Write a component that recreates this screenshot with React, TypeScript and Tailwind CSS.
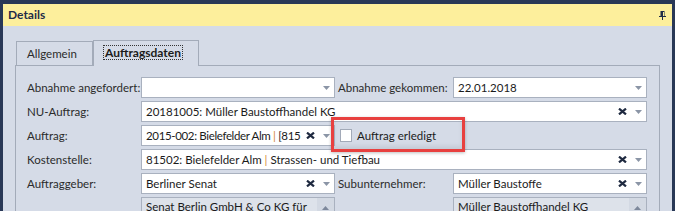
import React from "react";

const font = { fontFamily: 'Lato, "Noto Sans", sans-serif' };

function Arrow({ up = false }: { up?: boolean }) {
  return (
    <svg width="7" height="4" viewBox="0 0 7 4" className="shrink-0">
      {up ? <path d="M0 4 L3.5 0 L7 4 Z" fill="#7d889b" /> : <path d="M0 0 L7 0 L3.5 4 Z" fill="#8b95a6" />}
    </svg>
  );
}

function Clear() {
  return (
    <svg width="9" height="7" viewBox="0 0 9 7" className="shrink-0">
      <path d="M1 0.6 L8 6.4 M8 0.6 L1 6.4" stroke="#1f2a40" strokeWidth="2.2" />
    </svg>
  );
}

function Pipe() {
  return <span className="text-[#d3883a]">|</span>;
}

interface ComboProps {
  children?: React.ReactNode;
  wide?: boolean;
  clear?: boolean;
  tight?: boolean;
}

function Combo({ children, wide, clear, tight }: ComboProps) {
  return (
    <div
      className={
        (wide ? "w-[506px]" : "w-[194px]") +
        " h-[21px] shrink-0 bg-white border border-[#a9b1bf] flex items-center pl-[4px] pr-[4px] gap-[8px]"
      }
    >
      <div
        className={
          (tight ? "tracking-[-0.35px] -mr-[6px] " : "") +
          "flex-1 min-w-0 overflow-hidden whitespace-nowrap text-[11.5px] text-[#1b1b1b] leading-[15px]"
        }
      >
        {children}
      </div>
      {clear && <Clear />}
      <Arrow />
    </div>
  );
}

function Memo({ children }: { children: React.ReactNode }) {
  return (
    <div className="w-[194px] h-[30px] shrink-0 bg-[#dde2ea] border border-[#a9b1bf] flex items-start">
      <div className="flex-1 min-w-0 overflow-hidden whitespace-nowrap text-[11.5px] text-[#1b1b1b] pl-[4px] pt-[1px] leading-[15px]">
        {children}
      </div>
      <div className="w-[17px] h-[20px] bg-[#d3d9e3] flex items-center justify-center">
        <Arrow up />
      </div>
    </div>
  );
}

function Label({ children, second }: { children: React.ReactNode; second?: boolean }) {
  return (
    <div className={(second ? "ml-[3px] w-[115px]" : "w-[114px]") + " shrink-0 text-[11.5px] text-[#2b2b2b] whitespace-nowrap"}>
      {children}
    </div>
  );
}

export default function App() {
  return (
    <div className="w-[675px] h-[211px] overflow-hidden bg-[#293856] px-[3px] pt-[4px]" style={font}>
      <div className="flex flex-col h-full">
        <div className="h-[22px] shrink-0 bg-[#fdef9c] flex items-center justify-between pl-[5px] pr-[6px]">
          <span className="text-[12px] font-bold text-[#1f2c47]">Details</span>
          <svg width="7" height="9" viewBox="0 0 7 9">
            <path d="M1.5 0 H5.5 V5 H1.5 Z M0 5 H7 V6 H0 Z M3 6 H4 V9 H3 Z" fill="#1f2c47" />
            <path d="M4.5 1 V5" stroke="#fdef9c" strokeWidth="1" />
          </svg>
        </div>
        <div className="flex-1 bg-[#d5dbe7] px-[12px] pt-[14px]">
          <div className="relative z-10 flex items-start h-[26px] -mb-px pl-[1px]">
            <div className="mt-[1px] h-[24px] w-[77px] border border-b-0 border-[#a3abb9] flex items-center pl-[10px] text-[11.5px] text-[#2b2b2b]">
              Allgemein
            </div>
            <div className="h-[26px] w-[106px] border border-b-0 border-[#a3abb9] bg-[#d5dbe7] flex items-start pt-[4px] pl-[9px]">
              <span className="border border-dotted border-[#333] px-[1px] text-[12px] font-bold text-[#1b1b1b] leading-[13px]">
                Auftragsdaten
              </span>
            </div>
          </div>
          <div className="border border-[#a3abb9] h-[200px] pl-[11px] pt-[11px] flex flex-col gap-[3px]">
            <div className="flex items-center h-[21px]">
              <Label>Abnahme angefordert:</Label>
              <Combo />
              <Label second>Abnahme gekommen:</Label>
              <Combo>22.01.2018</Combo>
            </div>
            <div className="flex items-center h-[21px]">
              <Label>NU-Auftrag:</Label>
              <Combo wide clear>
                20181005: Müller Baustoffhandel KG
              </Combo>
            </div>
            <div className="relative flex items-center h-[21px]">
              <Label>Auftrag:</Label>
              <Combo clear tight>
                2015-002: Bielefelder Alm <Pipe /> [815
              </Combo>
              <div className="ml-[5px] w-[12px] h-[13px] bg-white border border-[#a2aab8]" />
              <span className="ml-[5px] text-[11.5px] text-[#1b1b1b]">Auftrag erledigt</span>
              <div className="absolute left-[304px] top-[-8px] w-[134px] h-[35px] border-[3px] border-[#e8403f] shadow-[inset_0_-3px_4px_rgba(0,0,0,0.08),0_1px_3px_rgba(0,0,0,0.25)]" />
            </div>
            <div className="flex items-center h-[21px]">
              <Label>Kostenstelle:</Label>
              <Combo wide clear>
                81502: Bielefelder Alm <Pipe /> Strassen- und Tiefbau
              </Combo>
            </div>
            <div className="flex items-center h-[21px]">
              <Label>Auftraggeber:</Label>
              <Combo clear>Berliner Senat</Combo>
              <Label second>Subunternehmer:</Label>
              <Combo clear>Müller Baustoffe</Combo>
            </div>
            <div className="flex items-start">
              <div className="w-[114px] shrink-0" />
              <Memo>Senat Berlin GmbH &amp; Co KG für</Memo>
              <div className="ml-[3px] w-[115px] shrink-0" />
              <Memo>Müller Baustoffhandel KG</Memo>
            </div>
          </div>
        </div>
      </div>
    </div>
  );
}
